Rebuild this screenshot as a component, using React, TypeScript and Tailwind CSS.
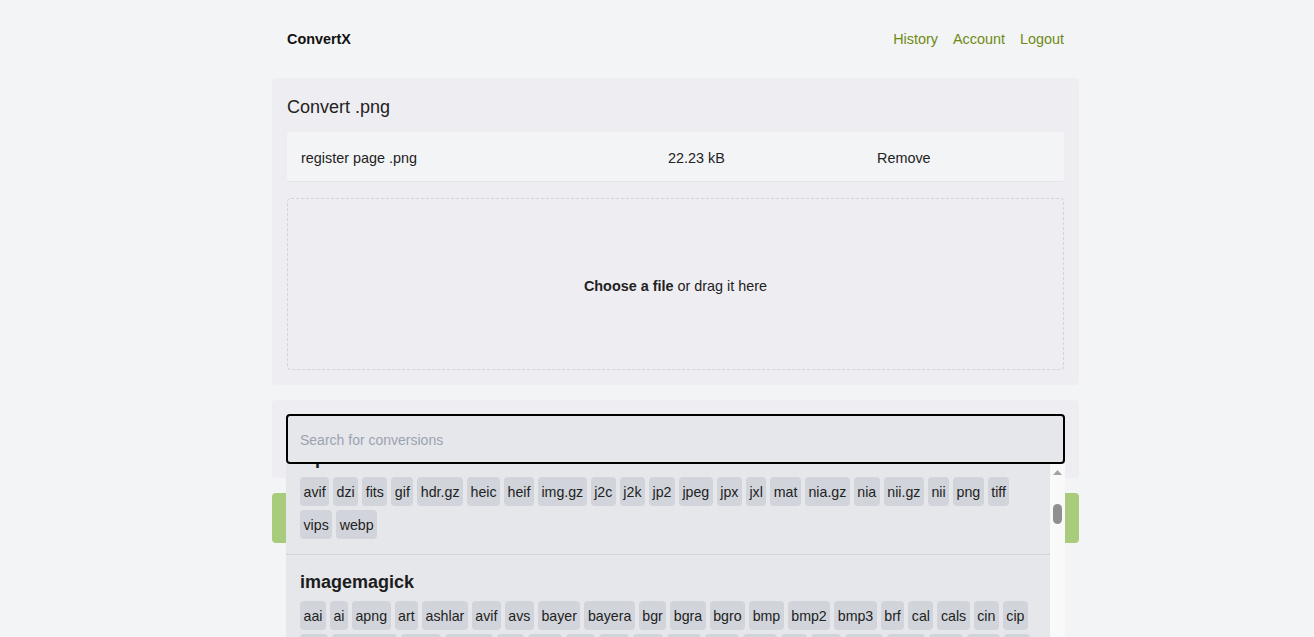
import { useState } from 'react'

const vipsFormats = ['avif', 'dzi', 'fits', 'gif', 'hdr.gz', 'heic', 'heif', 'img.gz', 'j2c', 'j2k', 'jp2', 'jpeg', 'jpx', 'jxl', 'mat', 'nia.gz', 'nia', 'nii.gz', 'nii', 'png', 'tiff', 'vips', 'webp']

const magickFormats = ['aai', 'ai', 'apng', 'art', 'ashlar', 'avif', 'avs', 'bayer', 'bayera', 'bgr', 'bgra', 'bgro', 'bmp', 'bmp2', 'bmp3', 'brf', 'cal', 'cals', 'cin', 'cip', 'clip', 'clipboard', 'cmyk', 'cmyka', 'cur', 'data', 'dcx', 'dds', 'dpx', 'dxt1', 'dxt5', 'epdf', 'epi', 'eps', 'eps2', 'eps3', 'epsf', 'epsi', 'ept', 'ept2', 'ept3', 'exr', 'farbfeld', 'fax', 'ff', 'fits', 'fl32', 'flif', 'ftxt', 'g3', 'g4', 'gif', 'gif87', 'gray', 'graya', 'group4', 'hdr', 'histogram', 'hrz', 'htm', 'html']

function ConverterSection({ name, formats }: { name: string; formats: string[] }) {
  return (
    <div className="border-b border-[#d1d5db] px-[14px] pb-[15px] pt-[13px]">
      <h2 className="mb-[5px] text-[18px] font-bold leading-[28px] text-[#1c1c1c]">{name}</h2>
      <div className="flex flex-wrap gap-[4px]">
        {formats.map((f) => (
          <button
            key={f}
            type="button"
            className="h-[29px] rounded-[4px] bg-[#d1d5db] px-[3.5px] pt-[1px] text-[14.2px] leading-[28px] text-[#222]"
          >
            {f}
          </button>
        ))}
      </div>
    </div>
  )
}

export default function App() {
  const [query, setQuery] = useState('')

  return (
    <div className="h-[637px] overflow-hidden bg-[#f3f4f6] text-[14.4px] text-[#222]" style={{ fontFamily: '"Liberation Sans", Arial, sans-serif' }}>
      <div className="ml-[272px] w-[807px]">
        <header className="flex h-[78px] items-center justify-between px-[15px] pt-[2px]">
          <span className="font-bold text-[#111]">ConvertX</span>
          <nav className="flex gap-[15px] text-[#6f8a14]">
            <a href="#">History</a>
            <a href="#">Account</a>
            <a href="#">Logout</a>
          </nav>
        </header>

        <main className="flex flex-col gap-[15px]">
          <article className="rounded-[4px] bg-[#eeeef2] p-[15px]">
            <h1 className="mb-[13px] pt-[2px] text-[18px] leading-[24px]">Convert .png</h1>
            <div className="grid h-[50px] grid-cols-[367px_209px_1fr] items-center rounded-[3px] border-b border-[#e4e4e8] bg-[#f3f4f6] px-[14px] pt-[5px]">
              <span>register page .png</span>
              <span>22.23 kB</span>
              <span>Remove</span>
            </div>
            <div className="mt-[16px] flex h-[172px] items-center justify-center rounded-[4px] border border-dashed border-[#d4d4d8] pt-[5px]">
              <p>
                <span className="font-bold">Choose a file</span> or drag it here
              </p>
            </div>
          </article>

          <article className="rounded-[4px] bg-[#eeeef2] p-[14px]">
            <div className="relative">
              <input
                autoFocus
                value={query}
                onChange={(e) => setQuery(e.target.value)}
                placeholder="Search for conversions"
                className="h-[50px] w-full rounded-[4px] border-2 border-black bg-[#e5e7eb] px-[12px] pt-[1px] text-[14px] outline-none placeholder:text-[#9ca3af]"
              />
              <div className="absolute left-0 right-0 top-full z-10 flex h-[400px]">
                <div className="flex-1 overflow-hidden bg-[#e5e7eb]">
                  <div className="-mt-[33px]">
                    <ConverterSection name="vips" formats={vipsFormats} />
                    <ConverterSection name="imagemagick" formats={magickFormats} />
                  </div>
                </div>
                <div className="flex w-[15px] flex-col items-center bg-[#f9f9f9]">
                  <svg width="9" height="5" viewBox="0 0 9 5" className="mt-[6px]">
                    <path d="M4.5 0 L9 5 L0 5 Z" fill="#a3a3a3" />
                  </svg>
                  <div className="mt-[29px] h-[20px] w-[9px] rounded-full bg-[#8f8f8f]" />
                </div>
              </div>
            </div>
          </article>

          <button type="button" className="h-[50px] rounded-[4px] bg-[#a9cc7c] font-bold text-white">
            Convert
          </button>
        </main>
      </div>
    </div>
  )
}
